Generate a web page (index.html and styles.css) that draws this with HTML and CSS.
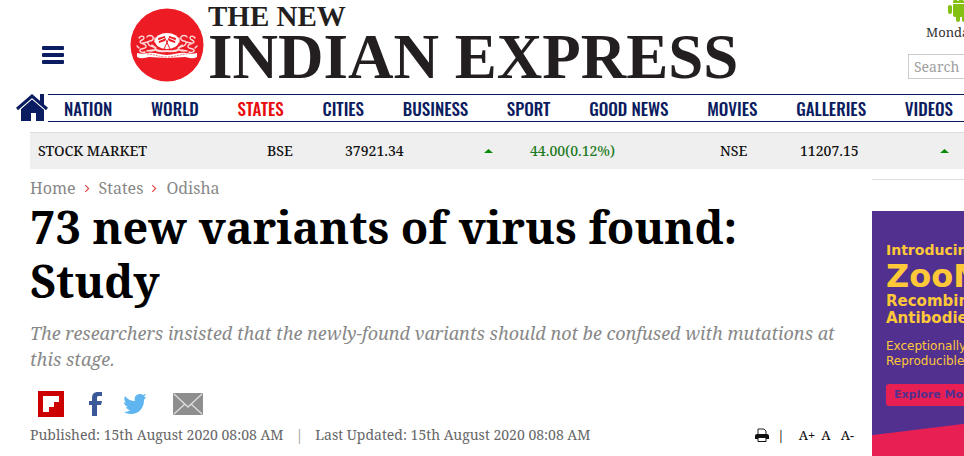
FILE: index.html
```html
<!DOCTYPE html>
<html lang="en">
<head>
    <meta charset="UTF-8">
    <meta name="viewport" content="width=device-width, initial-scale=1.0">
    <title>73 new variants of virus found: Study - The New Indian Express</title>
    <link rel="stylesheet" href="styles.css">
</head>
<body>
    <header class="header">
        <button class="menu-btn" aria-label="Menu"><span></span><span></span><span></span></button>
        <a class="logo" href="#">
            <svg class="emblem" viewBox="0 0 74 74" aria-hidden="true">
                <circle cx="37" cy="37" r="36.5" fill="#ed1c24"/>
                <g fill="none" stroke="#fff" stroke-linecap="round" opacity=".85">
                    <path d="M9 30c2-3 5-2 5 0s-4 2-4 4 5 1 6 4-5 2-6 4 3 3 5 2M17 29c1-2 5-2 6 0s-1 4-3 4-3 2-1 4 5 1 6 3-2 3-5 3M13 35l5-1M22 37l4 3M17 43l6-1M9 40l-2-2M25 30v4" stroke-width="1.400"/>
                    <path d="M65 30c-2-3-5-2-5 0s4 2 4 4-5 1-6 4 5 2 6 4-3 3-5 2M57 29c-1-2-5-2-6 0s1 4 3 4 3 2 1 4-5 1-6 3 2 3 5 3M61 35l-5-1M52 37l-4 3M57 43l-6-1M65 40l2-2M49 30v4" stroke-width="1.400"/>
                    <path d="M26 42c4 2 7 1 11 1s7 1 11-1" stroke-width="2"/>
                </g>
                <path d="M7 45c3 1 7 1 11 0 6-1 12 2 19 2s13-3 19-2c4 1 8 1 11 0v4c-4 2-8 1-12 0-6 0-11 1-18 1s-12-1-18-1c-4 1-8 2-12 0z" fill="#fff"/>
                <path d="M17 46c6 0 12 3 20 3s14-3 20-3" fill="none" stroke="#ed1c24" stroke-dasharray="2 1" opacity=".6"/>
                <ellipse cx="37" cy="33" rx="12" ry="8" fill="#fff"/>
                <path d="M28 30l7-2v5l-6 2zM46 30l-7-2v5l6 2z" fill="#ed1c24"/>
                <path d="M28 33l7-3M46 33l-7-3" stroke="#fff"/>
                <path d="M34 28l6 13M40 28l-6 13" stroke="#ed1c24"/>
            </svg>
            <span class="logo-text">
                <span class="logo-small">THE NEW</span>
                <span class="logo-big">INDIAN EXPRESS</span>
            </span>
        </a>
        <div class="header-side">
            <svg class="android" viewBox="0 0 28 30" fill="#84c011" aria-hidden="true">
                <path d="M6 11a8 8 0 0 1 16 0zM6 12h16v11a2 2 0 0 1-2 2H8a2 2 0 0 1-2-2z"/>
                <path d="M8 1l3 4M20 1l-3 4" stroke="#84c011"/>
                <rect x="1" y="13" width="4" height="9" rx="2"/>
                <rect x="23" y="13" width="4" height="9" rx="2"/>
                <rect x="9" y="22" width="4" height="8" rx="2"/>
                <rect x="15" y="22" width="4" height="8" rx="2"/>
                <circle cx="11" cy="8" r="1" fill="#fff"/><circle cx="17" cy="8" r="1" fill="#fff"/>
            </svg>
            <p class="date">Monday</p>
            <input class="search" type="text" placeholder="Search" aria-label="Search">
        </div>
    </header>

    <nav class="nav">
        <a class="home" href="#" aria-label="Home">
            <svg viewBox="0 0 32 28" fill="#0c1c60">
                <path d="M16 5L5 15v12h10v-8h5v8h8V15z"/>
                <path d="M1 15L16 2l15 13" fill="none" stroke="#fff" stroke-width="5"/>
                <path d="M1 15L16 2l15 13" fill="none" stroke="#0c1c60" stroke-width="3"/>
                <path d="M24 0h4v12l-4-4z"/>
            </svg>
        </a>
        <div class="nav-links">
            <a href="#">NATION</a>
            <a href="#">WORLD</a>
            <a class="active" href="#">STATES</a>
            <a href="#">CITIES</a>
            <a href="#">BUSINESS</a>
            <a href="#">SPORT</a>
            <a href="#">GOOD NEWS</a>
            <a href="#">MOVIES</a>
            <a href="#">GALLERIES</a>
            <a href="#">VIDEOS</a>
        </div>
    </nav>

    <div class="ticker">
        <span>STOCK MARKET</span>
        <span>BSE</span>
        <span>37921.34</span>
        <span class="up"></span>
        <span class="gain">44.00(0.12%)</span>
        <span>NSE</span>
        <span>11207.15</span>
        <span class="up"></span>
    </div>

    <div class="content">
        <main class="article">
            <div class="breadcrumb">
                <a href="#">Home</a>
                <svg viewBox="0 0 6 8"><path d="M1 1l3 3-3 3"/></svg>
                <a href="#">States</a>
                <svg viewBox="0 0 6 8"><path d="M1 1l3 3-3 3"/></svg>
                <a href="#">Odisha</a>
            </div>
            <h1>73 new variants of virus found: Study</h1>
            <p class="summary">The researchers insisted that the newly-found variants should not be confused with mutations at this stage.</p>
            <div class="share">
                <a href="#" aria-label="Flipboard">
                    <svg width="26" height="26" viewBox="0 0 26 26"><path d="M0 0h26v26H0z" fill="#c00"/><path d="M5 5h16v6h-5v5h-5v5H5z" fill="#fff"/></svg>
                </a>
                <a class="facebook" href="#" aria-label="Facebook">
                    <svg width="13" height="24" viewBox="0 0 13 24"><path d="M3 24V13H0V9h3V6c0-4 2-6 6-6h4v4h-3c-2 0-2 1-2 2v3h5l-1 4H8v11z" fill="#3b5998"/></svg>
                </a>
                <a class="twitter" href="#" aria-label="Twitter">
                    <svg width="22" height="20" viewBox="0 0 22 20"><path d="M22 3l-2 3C20 14 15 20 7 20c-3 0-5-1-7-2 3 0 5-1 6-2-2 0-3-1-4-3h2c-2-1-4-2-4-5l2 1C0 7 0 4 1 2c2 3 6 5 10 5-1-4 1-7 5-7 1 0 2 0 3 1l3-1-2 3z" fill="#5eb5f0"/></svg>
                </a>
                <a class="mail" href="#" aria-label="Email">
                    <svg width="30" height="22" viewBox="0 0 30 22"><rect width="30" height="22" rx="1" fill="#8e8e8e"/><path d="M1 1l14 13L29 1M1 21l11-10M29 21L18 11" fill="none" stroke="#ddd" stroke-width="1.300"/></svg>
                </a>
            </div>
            <div class="meta">
                <span>Published: 15th August 2020 08:08 AM</span>
                <span class="bar">|</span>
                <span>Last Updated: 15th August 2020 08:08 AM</span>
                <div class="tools">
                    <button aria-label="Print">
                        <svg width="14" height="14" viewBox="0 0 14 14"><path d="M3 7V1h6l2 2v4" fill="#fff" stroke="#222"/><path d="M2 6h10a2 2 0 0 1 2 2v3H0V8a2 2 0 0 1 2-2z" fill="#111"/><path d="M3 9.500h8v4H3z" fill="#fff" stroke="#111"/></svg>
                    </button>
                    <span class="tool-bar">|</span>
                    <button>A+</button>
                    <button>A</button>
                    <button class="smaller">A-</button>
                </div>
            </div>
        </main>
        <aside class="side">
            <div class="ad">
                <p class="ad-intro">Introducing</p>
                <p class="ad-name">ZooMAb</p>
                <p class="ad-type">Recombinant<br>Antibodies</p>
                <p class="ad-text">Exceptionally<br>Reproducible</p>
                <a class="ad-btn" href="#">Explore More</a>
            </div>
        </aside>
    </div>
</body>
</html>
```
FILE: styles.css
```css
* {
    margin: 0;
    padding: 0;
    box-sizing: border-box;
}
body {
    font-family: "Noto Serif", "DejaVu Serif Condensed", "DejaVu Serif", serif;
    background-color: #fff;
    color: #111;
    overflow: hidden;
}
a {
    color: inherit;
    text-decoration: none;
}
button {
    border: none;
    background: none;
    font: inherit;
    color: inherit;
}
svg {
    display: block;
}
.header {
    display: flex;
    height: 94px;
}
.menu-btn {
    display: flex;
    flex-direction: column;
    gap: 3px;
    width: 22px;
    height: 18px;
    margin: 46px 66px 0 42px;
}
.menu-btn span {
    width: 22px;
    height: 4px;
    border-radius: 1px;
    background-color: #0c1c60;
}
.logo {
    display: flex;
    gap: 4px;
    color: #231f20;
}
.emblem {
    width: 74px;
    height: 74px;
    margin-top: 8px;
}
.logo-text {
    display: flex;
    flex-direction: column;
    font-family: "Liberation Serif", serif;
    font-weight: bold;
    white-space: nowrap;
}
.logo-small {
    font-size: 29px;
    line-height: 32px;
}
.logo-big {
    font-size: 63px;
    line-height: 50px;
}
.header-side {
    width: 56px;
    margin-left: auto;
    overflow: hidden;
}
.android {
    width: 28px;
    height: 30px;
    margin: -8px 0 0 39px;
}
.date {
    margin-left: 18px;
    font-size: 13px;
    line-height: 20px;
    color: #333;
}
.search {
    width: 150px;
    height: 25px;
    margin-top: 12px;
    padding: 0 5px;
    border: 1px solid #ccc;
    font-family: inherit;
    font-size: 14px;
}
.search::placeholder {
    color: #a0a0a0;
}
.nav {
    display: flex;
    height: 28px;
    padding-left: 16px;
}
.home {
    width: 32px;
}
.home svg {
    width: 32px;
    height: 28px;
}
.nav-links {
    flex: 1;
    display: flex;
    justify-content: space-between;
    align-items: center;
    padding: 0 11px 0 16px;
    border-top: 1px solid #0c1c60;
    border-bottom: 1px solid #0c1c60;
    font-family: Oswald, "Roboto Condensed", "Liberation Sans Narrow", sans-serif;
    font-size: 17px;
    font-weight: 500;
    color: #0c1c60;
}
.active {
    color: #e80c0c;
}
.ticker {
    display: grid;
    grid-template-columns: 229fr 78fr 139fr 46fr 190fr 80fr 140fr 24fr;
    align-items: center;
    height: 37px;
    margin: 10px 0 0 30px;
    padding: 0 0 2px 8px;
    border-top: 1px solid #ddd;
    background-color: #efefef;
    font-size: 14px;
    font-weight: 500;
    white-space: nowrap;
}
.up {
    width: 9px;
    height: 4px;
    margin-top: 2px;
    background-color: #0a8a0a;
    clip-path: polygon(50% 0, 100% 100%, 0 100%);
}
.gain {
    color: #1e7a1e;
}
.content {
    display: flex;
    padding-left: 30px;
}
.article {
    flex: 1;
    padding: 7px 16px 0 0;
}
.breadcrumb {
    display: flex;
    align-items: center;
    gap: 8px;
    font-size: 16px;
    line-height: 24px;
    color: #888;
}
.breadcrumb svg {
    width: 7px;
    height: 9px;
    fill: none;
    stroke: #e84040;
}
h1 {
    font-size: 45px;
    line-height: 54px;
    color: #000;
}
.summary {
    margin-top: 12px;
    font-size: 18px;
    font-style: italic;
    line-height: 26px;
    color: #888;
}
.share {
    display: flex;
    align-items: center;
    height: 26px;
    margin: 19px 0 0 8px;
}
.facebook {
    margin-left: 25px;
}
.twitter {
    margin-left: 22px;
}
.mail {
    margin-left: 27px;
}
.meta {
    display: flex;
    align-items: center;
    margin-top: 7px;
    font-size: 14px;
    line-height: 22px;
    color: #666;
    white-space: nowrap;
}
.bar {
    margin: 0 12px;
    color: #999;
}
.tools {
    display: flex;
    align-items: center;
    margin-left: auto;
    color: #111;
    font-size: 13px;
    font-weight: 500;
}
.tool-bar {
    margin: 0 14px 0 8px;
}
.tools button + button {
    margin-left: 6px;
}
.tools .smaller {
    padding: 0 2px 0 4px;
}
.side {
    width: 92px;
    margin-top: 10px;
    border-top: 1px solid #ddd;
    overflow: hidden;
}
.ad {
    height: 250px;
    margin-top: 31px;
    padding: 31px 0 0 14px;
    background: linear-gradient(173deg, #51308f 222px, #e81f52 223px);
    font-family: "DejaVu Sans", sans-serif;
    font-weight: bold;
    color: #ffc838;
    white-space: nowrap;
}
.ad-intro,
.ad-type {
    font-size: 15px;
    line-height: 17px;
}
.ad-intro {
    font-size: 14px;
}
.ad-name {
    font-size: 32px;
    line-height: 34px;
}
.ad-text {
    margin-top: 12px;
    font-size: 12px;
    font-weight: normal;
    line-height: 15px;
}
.ad-btn {
    display: block;
    width: 120px;
    margin-top: 15px;
    padding-left: 8px;
    border-radius: 3px;
    background-color: #e81f52;
    color: #51308f;
    font-size: 11px;
    line-height: 22px;
}
```
